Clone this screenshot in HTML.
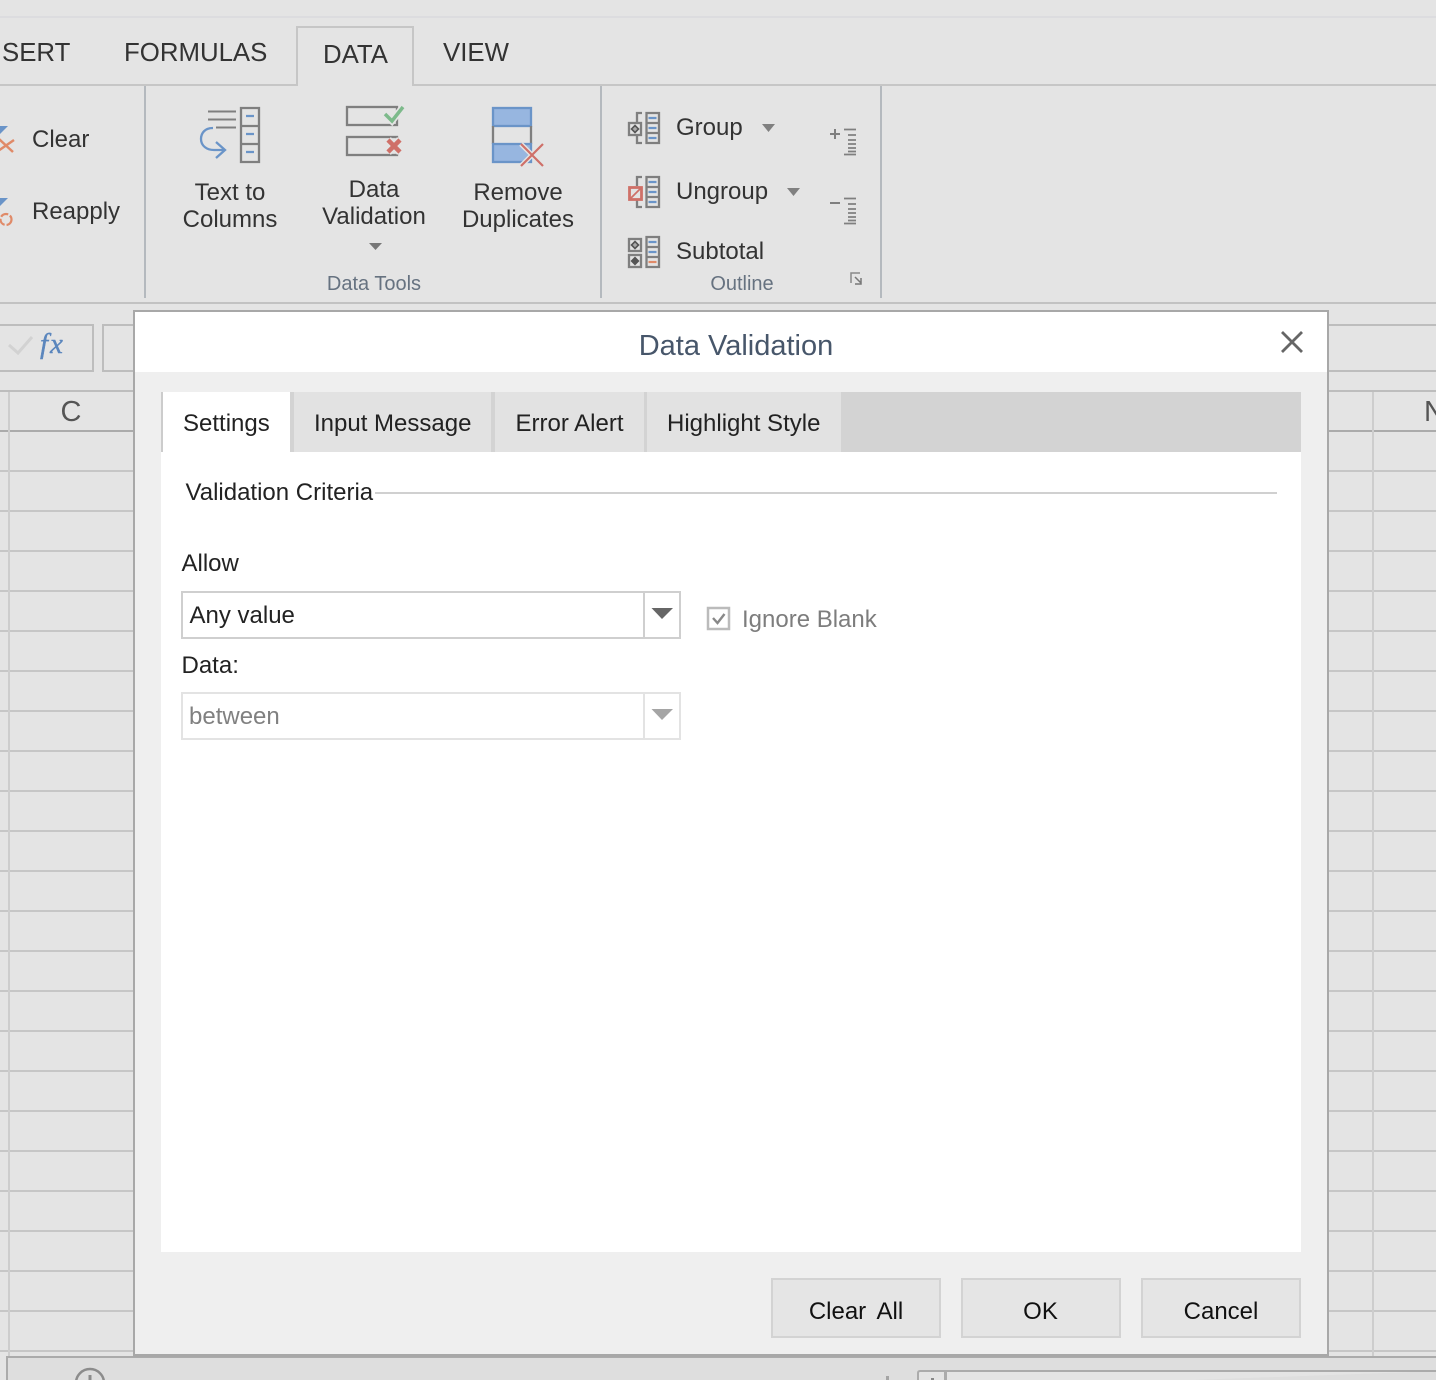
<!DOCTYPE html>
<html><head><meta charset="utf-8"><title>Data Validation</title>
<style>
html,body{margin:0;padding:0;background:#e4e4e4;width:1436px;height:1380px;overflow:hidden}
svg{display:block;position:absolute;left:0;top:0}
text{font-family:"Liberation Sans",Arial,sans-serif;font-size:24px;fill:#333}
.c{text-anchor:middle}
.d{fill:#222}
.g{font-size:20px;fill:#667280}
.i{fill:none;stroke:#7f7f7f;stroke-width:2.300}
.b{fill:none;stroke:#6a94c8;stroke-width:2.300}
</style></head><body>
<svg width="1436" height="1380" viewBox="0 0 1436 1380" xmlns="http://www.w3.org/2000/svg">
<rect width="1436" height="1380" fill="#e4e4e4"/>
<!-- ribbon chrome -->
<rect x="0" y="16" width="1436" height="2" fill="#dcdcdf"/>
<rect x="0" y="84" width="1436" height="2" fill="#c6c6c6"/>
<path d="M297 85V27H413V85" fill="#e4e4e4" stroke="#c6c6c6" stroke-width="2"/>
<rect x="298" y="84" width="114" height="2" fill="#e4e4e4"/>
<rect x="144" y="86" width="2" height="212" fill="#b4b9be"/>
<rect x="600" y="86" width="2" height="212" fill="#b4b9be"/>
<rect x="880" y="86" width="2" height="212" fill="#b4b9be"/>
<rect x="0" y="302" width="1436" height="2" fill="#c2c2c2"/>
<text x="2" y="61" style="font-size:25.800px">SERT</text>
<text x="124" y="61" style="font-size:25.800px">FORMULAS</text>
<text x="323" y="63" style="font-size:25.800px">DATA</text>
<text x="443" y="61" style="font-size:25.800px">VIEW</text>
<text x="32" y="147">Clear</text>
<text x="32" y="219">Reapply</text>
<text class="c" x="230" y="200">Text to</text>
<text class="c" x="230" y="227">Columns</text>
<text class="c" x="374" y="197">Data</text>
<text class="c" x="374" y="224">Validation</text>
<text class="c" x="518" y="200">Remove</text>
<text class="c" x="518" y="227">Duplicates</text>
<text class="c g" x="374" y="290">Data Tools</text>
<text x="676" y="135">Group</text>
<text x="676" y="199">Ungroup</text>
<text x="676" y="259">Subtotal</text>
<text class="c g" x="742" y="290">Outline</text>
<!-- clear / reapply icons -->
<path d="M0 126H8L0 134Z" fill="#6a94c8"/>
<path d="M-1 139L13 152M-2 151L14 140" fill="none" stroke="#e08a68" stroke-width="2.500"/>
<path d="M0 198H8L0 206Z" fill="#6a94c8"/>
<circle cx="6" cy="219.500" r="5.500" fill="none" stroke="#e08a68" stroke-width="2.200" stroke-dasharray="8 2"/>
<!-- text to columns -->
<path d="M208 111.500H236M208 119.500H236M216 127.500H236" fill="none" stroke="#7f7f7f" stroke-width="2"/>
<path class="i" d="M241 108H259V162H241ZM241 126H259M241 144H259"/>
<path d="M246 116H254M246 134H254M246 152H254" fill="none" stroke="#6a94c8" stroke-width="2.200"/>
<path class="b" d="M213 128C205 128 201 133 201 139C201 146 207 150 214 150H225M216 142L225 150L216 158"/>
<!-- data validation -->
<rect class="i" x="347" y="107" width="50" height="18"/>
<rect class="i" x="347" y="137" width="50" height="18"/>
<path d="M385 114L392 121L403 107" fill="none" stroke="#e4e4e4" stroke-width="7"/>
<path d="M385 114L392 121L403 107" fill="none" stroke="#7dba8b" stroke-width="3.500"/>
<path d="M388 140L400 152M400 140L388 152" fill="none" stroke="#e4e4e4" stroke-width="8"/>
<path d="M388 140L400 152M400 140L388 152" fill="none" stroke="#cf7068" stroke-width="4.500"/>
<path d="M369 243H382L375.500 250Z" fill="#777"/>
<!-- remove duplicates -->
<rect x="493" y="108" width="38" height="18" fill="#97b6e0" stroke="#6a94c8" stroke-width="2.300"/>
<path class="i" d="M493 126V144M531 126V144"/>
<rect x="493" y="144" width="38" height="18" fill="#97b6e0" stroke="#6a94c8" stroke-width="2.300"/>
<path d="M521 144L543 166M543 144L521 166" fill="none" stroke="#e4e4e4" stroke-width="5"/>
<path d="M521 144L543 166M543 144L521 166" fill="none" stroke="#cf7068" stroke-width="2.200"/>
<!-- group -->
<path class="i" d="M642 113H637V122M637 135V143H642"/>
<rect class="i" x="629" y="123" width="12" height="12"/>
<path d="M635 125.500L638.500 129L635 132.500L631.500 129Z" fill="#aaa" stroke="#555" stroke-width="1.600"/>
<path class="i" d="M646.500 113H659V143H646.500ZM646.500 123H659M646.500 133H659"/>
<path d="M648.500 118H656.500M648.500 128H656.500M648.500 138H656.500" stroke="#6a94c8" stroke-width="2.200"/>
<path d="M762 124H775L768.500 132Z" fill="#808080"/>
<!-- ungroup -->
<path class="i" d="M642 177H637V186M637 199V207H642"/>
<rect x="629.500" y="187.500" width="12" height="12" fill="none" stroke="#cf7068" stroke-width="2.800"/>
<path d="M630 199L641 188" stroke="#cf7068" stroke-width="1.800"/>
<path class="i" d="M646.500 177H659V207H646.500ZM646.500 187H659M646.500 197H659"/>
<path d="M648.500 182H656.500M648.500 192H656.500M648.500 202H656.500" stroke="#6a94c8" stroke-width="2.200"/>
<path d="M787 188H800L793.500 196Z" fill="#808080"/>
<!-- subtotal -->
<rect class="i" x="629" y="239" width="12" height="12"/>
<path d="M635 241.500L638.500 245L635 248.500L631.500 245Z" fill="#aaa" stroke="#555" stroke-width="1.600"/>
<rect class="i" x="629" y="255" width="12" height="12"/>
<path d="M635 256.500L639.500 261L635 265.500L630.500 261Z" fill="#555"/>
<path class="i" d="M646.500 237H659V267H646.500ZM646.500 247H659M646.500 257H659"/>
<path d="M648.500 242H656.500M648.500 252H656.500" stroke="#6a94c8" stroke-width="2.200"/>
<path d="M648.500 262H656.500" stroke="#e08a68" stroke-width="2.200"/>
<!-- show/hide detail -->
<path d="M830 134H840M835 129V139" stroke="#7f7f7f" stroke-width="2"/>
<path d="M844 129.500H856M848 135H856M848 140H856M848 144H856M848 148H856M848 151.500H856M844 154.500H856" stroke="#7f7f7f" stroke-width="1.800"/>
<path d="M830 203H840" stroke="#7f7f7f" stroke-width="2"/>
<path d="M844 198.500H856M848 204H856M848 209H856M848 213H856M848 217H856M848 220.500H856M844 223.500H856" stroke="#7f7f7f" stroke-width="1.800"/>
<path d="M851 283V273H860" fill="none" stroke="#888" stroke-width="1.500"/>
<path d="M855 277L861 283M861 278V284H855" fill="none" stroke="#777" stroke-width="1.500"/>
<!-- formula bar -->
<rect x="-4" y="325" width="97" height="46" fill="none" stroke="#bdbdbd" stroke-width="2"/>
<rect x="103" y="325" width="1400" height="46" fill="none" stroke="#bdbdbd" stroke-width="2"/>
<path d="M9 345L18 353L32 337" fill="none" stroke="#d2d2d2" stroke-width="3"/>
<text x="40" y="353" style="font-family:'Liberation Serif',serif;font-style:italic;font-size:29px;letter-spacing:2px;fill:#5b86bd;stroke:#5b86bd;stroke-width:.4px">fx</text>
<!-- grid -->
<rect x="0" y="390" width="1436" height="2" fill="#bdbdbd"/>
<rect x="0" y="430" width="1436" height="2" fill="#ababab"/>
<path d="M0 471H1436M0 511H1436M0 551H1436M0 591H1436M0 631H1436M0 671H1436M0 711H1436M0 751H1436M0 791H1436M0 831H1436M0 871H1436M0 911H1436M0 951H1436M0 991H1436M0 1031H1436M0 1071H1436M0 1111H1436M0 1151H1436M0 1191H1436M0 1231H1436M0 1271H1436M0 1311H1436M0 1351H1436" stroke="#c6c6c6" stroke-width="2"/>
<rect x="8" y="392" width="2" height="970" fill="#cdcdcd"/>
<rect x="1372" y="392" width="2" height="970" fill="#cdcdcd"/>
<text x="60.500" y="421" style="font-size:29px;fill:#555">C</text>
<text x="1424" y="421" style="font-size:29px;fill:#555">N</text>
<!-- bottom bar -->
<rect x="7" y="1357" width="1440" height="30" fill="#dedede" stroke="#ababab" stroke-width="2"/>
<circle cx="90" cy="1383" r="14" fill="none" stroke="#8c8c8c" stroke-width="2.500"/>
<rect x="88.500" y="1375" width="3" height="5" fill="#8c8c8c"/>
<rect x="886" y="1376" width="3" height="4" fill="#a5a5a5"/>
<path d="M918 1390V1373Q918 1371 920 1371H1440" fill="#e4e4e4" stroke="#ababab" stroke-width="2"/>
<rect x="944" y="1371" width="3" height="12" fill="#ababab"/>
<rect x="931" y="1378" width="3" height="2" fill="#888"/>
<!-- dialog -->
<rect x="134" y="311" width="1194" height="1045" fill="#efefef" stroke="#a8a8a8" stroke-width="2"/>
<rect x="133" y="1354" width="1196" height="3" fill="#a8a8a8"/>
<rect x="135" y="312" width="1192" height="60" fill="#fff"/>
<text class="c" x="736" y="355" style="font-size:29px;fill:#47566a">Data Validation</text>
<path d="M1282 332L1302 352M1302 332L1282 352" stroke="#666" stroke-width="2.800" fill="none"/>
<!-- tabs -->
<rect x="161" y="392" width="1140" height="60" fill="#d3d3d3"/>
<rect x="161" y="392" width="2" height="60" fill="#cccccc"/>
<rect x="163" y="392" width="127" height="60" fill="#fff"/>
<rect x="294" y="392" width="197" height="60" fill="#e2e2e2"/>
<rect x="495" y="392" width="149" height="60" fill="#e2e2e2"/>
<rect x="647" y="392" width="194" height="60" fill="#e2e2e2"/>
<text class="d" x="183" y="431">Settings</text>
<text class="d" x="314" y="431">Input Message</text>
<text class="d" x="515.500" y="431">Error Alert</text>
<text class="d" x="667" y="431">Highlight Style</text>
<!-- panel -->
<rect x="161" y="452" width="1140" height="800" fill="#fff"/>
<text class="d" x="185.500" y="500">Validation Criteria</text>
<rect x="375" y="492" width="902" height="2" fill="#d0d0d0"/>
<text class="d" x="181.500" y="571">Allow</text>
<rect x="182" y="592" width="498" height="46" fill="#fff" stroke="#cfcfcf" stroke-width="2"/>
<rect x="643" y="592" width="2" height="46" fill="#cfcfcf"/>
<text class="d" x="189.500" y="623">Any value</text>
<path d="M651.500 608H673L662 619Z" fill="#666"/>
<rect x="708" y="608" width="21" height="21" fill="#fff" stroke="#bbb" stroke-width="2.500"/>
<path d="M713 618L717.500 623L724.500 614" fill="none" stroke="#888" stroke-width="2.400"/>
<text x="742" y="627" style="fill:#7d7d7d">Ignore Blank</text>
<text class="d" x="181.500" y="673">Data:</text>
<rect x="182" y="693" width="498" height="46" fill="#fff" stroke="#e3e3e3" stroke-width="2"/>
<rect x="643" y="693" width="2" height="46" fill="#e3e3e3"/>
<text x="189" y="724" style="fill:#808080">between</text>
<path d="M651.500 709H673L662 720Z" fill="#a5a5a5"/>
<!-- buttons -->
<rect x="772" y="1279" width="168" height="58" fill="#e5e5e5" stroke="#d3d3d3" stroke-width="2"/>
<rect x="962" y="1279" width="158" height="58" fill="#e5e5e5" stroke="#d3d3d3" stroke-width="2"/>
<rect x="1142" y="1279" width="158" height="58" fill="#e5e5e5" stroke="#d3d3d3" stroke-width="2"/>
<text class="c" x="856" y="1319" style="fill:#111" word-spacing="5">Clear All</text>
<text class="c" x="1040.500" y="1319" style="fill:#111">OK</text>
<text class="c" x="1221" y="1319" style="fill:#111">Cancel</text>
</svg>
</body></html>
